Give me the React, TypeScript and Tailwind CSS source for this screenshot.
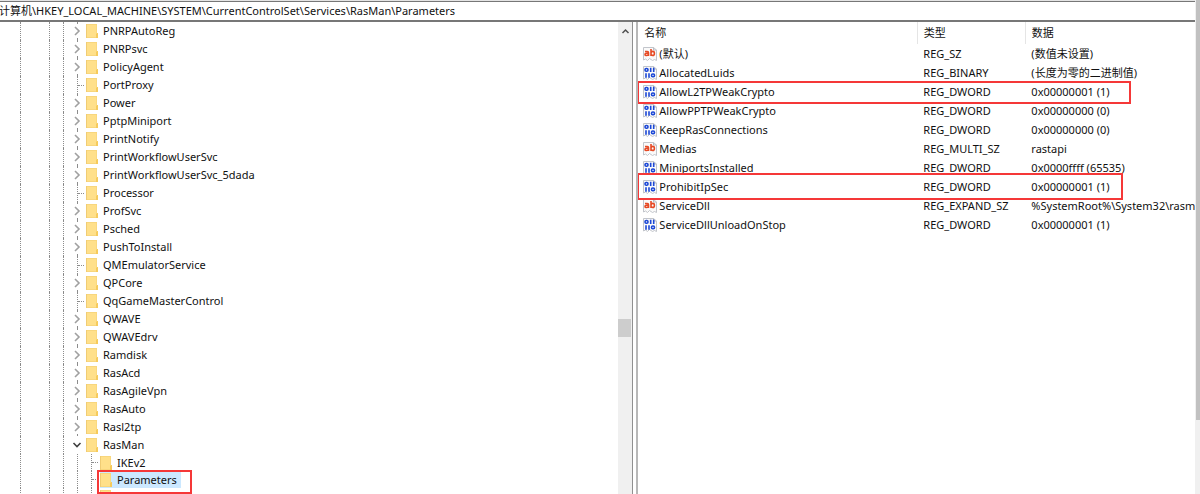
import { clsx } from "clsx"

type TreeItem = {
  name: string
  leaf?: boolean
  open?: boolean
  selected?: boolean
  children?: TreeItem[]
}

const services: TreeItem[] = [
  { name: "PNRPAutoReg" },
  { name: "PNRPsvc" },
  { name: "PolicyAgent" },
  { name: "PortProxy", leaf: true },
  { name: "Power" },
  { name: "PptpMiniport" },
  { name: "PrintNotify" },
  { name: "PrintWorkflowUserSvc" },
  { name: "PrintWorkflowUserSvc_5dada" },
  { name: "Processor", leaf: true },
  { name: "ProfSvc" },
  { name: "Psched" },
  { name: "PushToInstall" },
  { name: "QMEmulatorService", leaf: true },
  { name: "QPCore" },
  { name: "QqGameMasterControl", leaf: true },
  { name: "QWAVE" },
  { name: "QWAVEdrv" },
  { name: "Ramdisk" },
  { name: "RasAcd" },
  { name: "RasAgileVpn" },
  { name: "RasAuto" },
  { name: "Rasl2tp" },
  {
    name: "RasMan",
    open: true,
    children: [
      { name: "IKEv2", leaf: true },
      { name: "Parameters", leaf: true, selected: true },
      { name: "PPP", leaf: true },
    ],
  },
]

const values = [
  { name: "(默认)", type: "REG_SZ", data: "(数值未设置)", text: true },
  { name: "AllocatedLuids", type: "REG_BINARY", data: "(长度为零的二进制值)" },
  {
    name: "AllowL2TPWeakCrypto",
    type: "REG_DWORD",
    data: "0x00000001 (1)",
    mark: "-top-px h-[23px] w-[494px]",
  },
  { name: "AllowPPTPWeakCrypto", type: "REG_DWORD", data: "0x00000000 (0)" },
  { name: "KeepRasConnections", type: "REG_DWORD", data: "0x00000000 (0)" },
  { name: "Medias", type: "REG_MULTI_SZ", data: "rastapi", text: true },
  { name: "MiniportsInstalled", type: "REG_DWORD", data: "0x0000ffff (65535)" },
  {
    name: "ProhibitIpSec",
    type: "REG_DWORD",
    data: "0x00000001 (1)",
    mark: "-top-1 h-[27px] w-[486px]",
  },
  { name: "ServiceDll", type: "REG_EXPAND_SZ", data: "%SystemRoot%\\System32\\rasman.dll", text: true },
  { name: "ServiceDllUnloadOnStop", type: "REG_DWORD", data: "0x00000001 (1)" },
]

function FolderIcon() {
  return (
    <svg width="13" height="16" viewBox="0 0 13 16" className="shrink-0" aria-hidden="true">
      <path d="M1 1h10v10l1 1v3H1z" fill="#ffe08a" />
      <path d="M.5 1v14" stroke="#f0cc74" />
      <path d="M1 1.5h10M1 14.5h9" stroke="#f8d67c" />
      <path d="M10 15v-4l1-1h1v5z" fill="#f6cb5c" />
      <path d="M10.5 2v8" stroke="#fad97f" />
    </svg>
  )
}

function PageShape() {
  return (
    <>
      <path d="M.5.5h10l3 2.500v10.500l-2-1-2 1-3-2-2 2-2-1.500-2 1z" fill="#fafafa" stroke="#c2c5cb" />
      <path d="M10.500.5v2.500h3" fill="none" stroke="#b9bcc2" />
    </>
  )
}

function StringIcon() {
  return (
    <svg width="14" height="14" viewBox="0 0 14 14" className="shrink-0" aria-hidden="true">
      <PageShape />
      <g fill="none" stroke="#e64a25" strokeWidth="1.6">
        <path d="M2 4.500h2.300q1.200 0 1.200 1.200V9M5.500 6.300H3.300q-1.300 0-1.300 1.100t1.300 1.100q1.500 0 2.200-1" />
        <path d="M8 2v7M8 5.600q.6-1.200 1.800-1.200 1.600 0 1.600 2t-1.600 2q-1.200 0-1.800-1.100" />
      </g>
    </svg>
  )
}

function BinaryIcon() {
  return (
    <svg width="14" height="14" viewBox="0 0 14 14" className="shrink-0" aria-hidden="true">
      <PageShape />
      <g fill="none" stroke="#1c48d6" strokeWidth="1.6">
        <rect x="2" y="2.500" width="3" height="2.800" rx="1.200" />
        <path d="M7.700 1.700v4.400M10.700 1.700v4.400M3 7.300v4.400M6 7.300v4.400" />
        <rect x="8.500" y="8" width="3" height="2.800" rx="1.200" />
      </g>
    </svg>
  )
}

function Toggle({ open }: { open?: boolean }) {
  return (
    <button type="button" aria-label={open ? "折叠" : "展开"} className="flex h-3.5 w-3.5 items-center justify-center bg-white">
      <svg width="10" height="10" viewBox="0 0 10 10" fill="none" aria-hidden="true">
        {open ? (
          <path d="M1.500 3 5 6.500 8.500 3" stroke="#404040" strokeWidth="1.600" />
        ) : (
          <path d="M3 1l4 4-4 4" stroke="#a0a0a0" strokeWidth="1.600" />
        )}
      </svg>
    </button>
  )
}

function Guide({ className }: { className: string }) {
  return <span className={clsx("h-full shrink-0 border-l border-dotted border-[#8c8c8c]", className)} />
}

function TreeNode({ item, nested }: { item: TreeItem; nested?: boolean }) {
  return (
    <li>
      <div className={clsx("flex items-center pl-5", nested ? "h-[17px]" : "h-[18px]")}>
        <Guide className="w-[29px]" />
        <Guide className="w-3.5" />
        {nested ? (
          <>
            <Guide className="w-3.5" />
            <Guide className="w-3.5" />
          </>
        ) : (
          <Guide className="w-[7px]" />
        )}
        {item.leaf ? (
          <span className={clsx("flex h-full shrink-0 items-center", !nested && "pl-[7px]")}>
            <Guide className="w-0" />
            <span className="w-1.5 border-t border-dotted border-[#8c8c8c]" />
          </span>
        ) : (
          <span
            className={clsx(
              "grid h-full w-3.5 shrink-0 place-items-center",
              !item.open && "bg-[linear-gradient(90deg,transparent_7px,#8c8c8c_7px,#8c8c8c_8px,transparent_8px)]",
            )}
          >
            <Toggle open={item.open} />
          </span>
        )}
        <a
          href="#"
          className={clsx("relative ml-0.5 flex h-[17px] items-center gap-1 pr-1 whitespace-nowrap", item.selected && "bg-[#cce8ff]")}
        >
          <FolderIcon />
          {item.name}
          {item.selected && (
            <span className="pointer-events-none absolute -top-px -left-[3px] z-10 h-6 w-[95px] border-2 border-[#f53838]" />
          )}
        </a>
      </div>
      {item.children && (
        <ul>
          {item.children.map((child) => (
            <TreeNode key={child.name} item={child} nested />
          ))}
        </ul>
      )}
    </li>
  )
}

function ValueTable() {
  return (
    <table className="w-full table-fixed border-collapse text-left">
      <colgroup>
        <col className="w-[279px]" />
        <col className="w-[108px]" />
        <col />
      </colgroup>
      <thead>
        <tr className="h-[22px]">
          <th className="border-r border-[#e5e5e5] py-0 pl-1.5 font-normal">名称</th>
          <th className="border-r border-[#e5e5e5] py-0 pl-1.5 font-normal">类型</th>
          <th className="py-0 pl-1.5 font-normal">数据</th>
        </tr>
      </thead>
      <tbody>
        {values.map((value) => (
          <tr key={value.name} className="h-[19px]">
            <td className="relative p-0 pl-[5px]">
              <span className="flex items-center gap-0.5">
                {value.text ? <StringIcon /> : <BinaryIcon />}
                {value.name}
              </span>
              {value.mark && (
                <span className={clsx("pointer-events-none absolute -left-px z-10 border-2 border-[#f53838]", value.mark)} />
              )}
            </td>
            <td className="p-0 pl-1.5">{value.type}</td>
            <td className="overflow-hidden p-0 pl-1.5 whitespace-nowrap">{value.data}</td>
          </tr>
        ))}
      </tbody>
    </table>
  )
}

export default function App() {
  return (
    <div className="flex h-screen overflow-hidden bg-white font-['Noto_Sans','Noto_Sans_CJK_SC',sans-serif] text-[11px] leading-[18px] text-[#111]">
      <div className="flex min-w-0 flex-1 flex-col bg-[#e4e4e4] pt-px">
        <header className="flex h-[21px] shrink-0 items-center overflow-hidden border-t border-b-2 border-[#777] bg-white whitespace-nowrap">
          <span className="-ml-px">计算机\HKEY_LOCAL_MACHINE\SYSTEM\CurrentControlSet\Services\RasMan\Parameters</span>
        </header>
        <main className="flex min-h-0 flex-1 bg-white">
          <nav className="flex w-[53%] shrink-0 overflow-hidden border-r border-[#909090]">
            <ul className="flex-1">
              {services.map((item) => (
                <TreeNode key={item.name} item={item} />
              ))}
            </ul>
            <div className="flex w-3.5 flex-col bg-[#f0f0f0]">
              <button type="button" aria-label="向上滚动" className="flex h-[18px] items-center justify-center">
                <svg width="9" height="9" viewBox="0 0 9 9" fill="none" aria-hidden="true">
                  <path d="M1.500 6 4.500 3l3 3" stroke="#505050" strokeWidth="1.500" />
                </svg>
              </button>
              <span className="mt-[279px] h-[18px] w-[13px] bg-[#cdcdcd]" />
            </div>
          </nav>
          <section className="ml-[3px] min-w-0 flex-1 overflow-hidden border-l-2 border-[#b8b8b8]">
            <ValueTable />
          </section>
        </main>
      </div>
      <aside className="flex w-[5px] shrink-0 flex-col bg-[#f0f0f0] pl-px">
        <span className="h-[85%] bg-[#c1c1c1]" />
      </aside>
    </div>
  )
}
